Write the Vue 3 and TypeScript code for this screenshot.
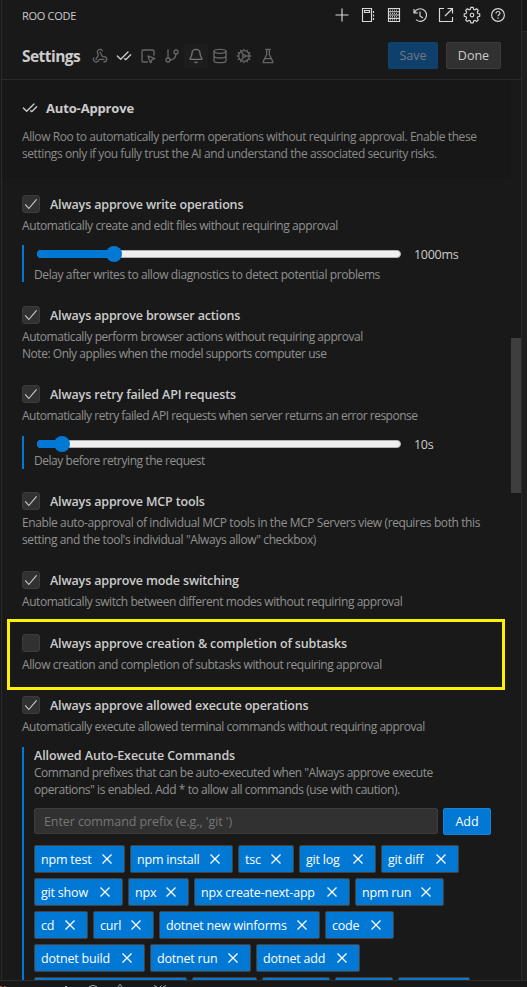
<script setup lang="ts">
interface Line { text: string; tracking: number }
interface Slider { percent: number; value: string; hint: Line }
interface Option { id: string; label: string; lines: Line[]; checked: boolean; slider?: Slider }
interface Chip { text: string; width: number }

const options: Option[] = [
  {
    id: 'write', label: 'Always approve write operations', checked: true,
    lines: [{ text: 'Automatically create and edit files without requiring approval', tracking: -0.41 }],
    slider: { percent: 21.2, value: '1000ms', hint: { text: 'Delay after writes to allow diagnostics to detect potential problems', tracking: -0.4 } },
  },
  {
    id: 'browser', label: 'Always approve browser actions', checked: true,
    lines: [
      { text: 'Automatically perform browser actions without requiring approval', tracking: -0.46 },
      { text: 'Note: Only applies when the model supports computer use', tracking: -0.46 },
    ],
  },
  {
    id: 'retry', label: 'Always retry failed API requests', checked: true,
    lines: [{ text: 'Automatically retry failed API requests when server returns an error response', tracking: -0.49 }],
    slider: { percent: 6.9, value: '10s', hint: { text: 'Delay before retrying the request', tracking: -0.45 } },
  },
  {
    id: 'mcp', label: 'Always approve MCP tools', checked: true,
    lines: [
      { text: 'Enable auto-approval of individual MCP tools in the MCP Servers view (requires both this', tracking: -0.4 },
      { text: 'setting and the tool\'s individual "Always allow" checkbox)', tracking: -0.4 },
    ],
  },
  {
    id: 'mode', label: 'Always approve mode switching', checked: true,
    lines: [{ text: 'Automatically switch between different modes without requiring approval', tracking: -0.44 }],
  },
  {
    id: 'subtasks', label: 'Always approve creation & completion of subtasks', checked: false,
    lines: [{ text: 'Allow creation and completion of subtasks without requiring approval', tracking: -0.43 }],
  },
  {
    id: 'execute', label: 'Always approve allowed execute operations', checked: true,
    lines: [{ text: 'Automatically execute allowed terminal commands without requiring approval', tracking: -0.47 }],
  },
]

const commandHelp: Line[] = [
  { text: 'Command prefixes that can be auto-executed when "Always approve execute', tracking: -0.47 },
  { text: 'operations" is enabled. Add * to allow all commands (use with caution).', tracking: -0.44 },
]

const chipRows: Chip[][] = [
  [{ text: 'npm test', width: 91 }, { text: 'npm install', width: 103 }, { text: 'tsc', width: 56 }, { text: 'git log', width: 77 }, { text: 'git diff', width: 78 }],
  [{ text: 'git show', width: 89 }, { text: 'npx', width: 61 }, { text: 'npx create-next-app', width: 156 }, { text: 'npm run', width: 89 }],
  [{ text: 'cd', width: 54 }, { text: 'curl', width: 61 }, { text: 'dotnet new winforms', width: 161 }, { text: 'code', width: 69 }],
  [{ text: 'dotnet build', width: 111 }, { text: 'dotnet run', width: 101 }, { text: 'dotnet add', width: 104 }],
  [{ text: '', width: 153 }, { text: '', width: 65 }, { text: '', width: 68 }, { text: '', width: 58 }, { text: '', width: 72 }],
]

const spacing = (l: Line) => ({ letterSpacing: l.tracking + 'px' })
</script>

<template>
  <div class="window">
    <main class="panel">
      <div class="titlebar">
        <span class="view-name">ROO CODE</span>
        <div class="actions">
          <svg viewBox="0 0 16 16"><path d="M8 1.500v13M1.500 8h13" /></svg>
          <svg viewBox="0 0 16 16"><path d="M2.500 1.500h9v13h-9zM4.500 3.500h5v2h-5zM13.500 4v2M13.500 7.500v2M13.500 11v2" /></svg>
          <svg viewBox="0 0 16 16"><path d="M2.500 1.500h11v3.200h-11zM2.500 4.700h11V8h-11zM2.500 8h11v3.300h-11zM2.500 11.300h11v3.200h-11z" /><path class="dots" d="M4 3.100h8M4 6.400h8M4 9.700h8M4 12.900h8" /></svg>
          <svg viewBox="0 0 16 16"><path d="M2 2v4h4M2.300 6A6.300 6.300 0 1 1 4 12.700M8 4.500V9l3 2" /></svg>
          <svg viewBox="0 0 16 16"><path d="M6 1.500H1.500v13h13V10M9.500 1.500h5v5M14.500 1.500L7 9" /></svg>
          <svg viewBox="0 0 16 16"><path d="M6.800.6h2.400l.5 2 1.400.6 1.800-1.100 1.700 1.700-1.100 1.800.6 1.400 2 .5v2.400l-2 .5-.6 1.400 1.100 1.800-1.700 1.700-1.800-1.100-1.400.6-.5 2H6.800l-.5-2-1.400-.6-1.800 1.100-1.700-1.700 1.100-1.800-.6-1.400-2-.5V7.500l2-.5.6-1.400-1.100-1.800 1.700-1.700 1.800 1.100 1.400-.6z" transform="translate(.3 -.25) scale(.96)" /><circle cx="8" cy="8" r="1.800" /></svg>
          <svg viewBox="0 0 16 16"><circle cx="8" cy="8" r="6.400" /><path d="M6 6.500C6 3.800 10 4 10 6.300 10 7.800 8 7.800 8 9.300M8 10.600v1.200" /></svg>
        </div>
      </div>

      <header class="header">
        <h1>Settings</h1>
        <nav class="tabs">
          <span class="tab"><svg viewBox="0 0 24 24"><path d="M18 16.980h-5.990c-1.100 0-1.950.940-2.480 1.900A4 4 0 0 1 2 17c.010-.7.200-1.400.570-2" /><path d="m6 17 3.130-5.780c.530-.970.100-2.180-.5-3.100a4 4 0 1 1 6.890-4.060" /><path d="m12 6 3.130 5.730C15.660 12.700 16.900 13 18 13a4 4 0 0 1 0 8" /></svg></span>
          <span class="tab active"><svg viewBox="0 0 24 24"><path d="M18 6 7 17l-5-5" /><path d="m22 10-7.500 7.500L13 16" /></svg></span>
          <span class="tab"><svg viewBox="0 0 24 24"><path d="M12.034 12.681a.498.498 0 0 1 .647-.647l9 3.500a.5.500 0 0 1-.033.943l-3.444 1.068a1 1 0 0 0-.660.660l-1.067 3.443a.5.500 0 0 1-.943.033z" /><path d="M21 11V5a2 2 0 0 0-2-2H5a2 2 0 0 0-2 2v14a2 2 0 0 0 2 2h6" /></svg></span>
          <span class="tab"><svg viewBox="0 0 24 24"><path d="M6 3v12" /><circle cx="18" cy="6" r="3" /><circle cx="6" cy="18" r="3" /><path d="M18 9a9 9 0 0 1-9 9" /></svg></span>
          <span class="tab hovered"><svg viewBox="0 0 24 24"><path d="M10.268 21a2 2 0 0 0 3.464 0" /><path d="M3.262 15.326A1 1 0 0 0 4 17h16a1 1 0 0 0 .740-1.673C19.410 13.956 18 12.499 18 8A6 6 0 0 0 6 8c0 4.499-1.411 5.956-2.738 7.326" /></svg></span>
          <span class="tab"><svg viewBox="0 0 24 24"><ellipse cx="12" cy="5" rx="9" ry="3" /><path d="M3 5v14a9 3 0 0 0 18 0V5M3 12a9 3 0 0 0 18 0" /></svg></span>
          <span class="tab"><svg viewBox="0 0 24 24"><path d="M12 20a8 8 0 1 0 0-16 8 8 0 0 0 0 16ZM12 14a2 2 0 1 0 0-4 2 2 0 0 0 0 4ZM12 2v2M12 22v-2M17 20.660l-1-1.730M11 10.270 7 3.340M20.660 17l-1.730-1M3.340 7l1.730 1M14 12h8M2 12h2M20.660 7l-1.730 1M3.340 17l1.730-1M17 3.340l-1 1.730M11 13.730l-4 6.930" /></svg></span>
          <span class="tab"><svg viewBox="0 0 24 24"><path d="M10 2v7.500a2 2 0 0 1-.200.900L4.700 20.500a1 1 0 0 0 .900 1.500h12.800a1 1 0 0 0 .900-1.500L14.200 10.400a2 2 0 0 1-.200-.900V2M8.500 2h7M7 16h10" /></svg></span>
        </nav>
        <button class="btn save">Save</button>
        <button class="btn done">Done</button>
      </header>

      <div class="scroll">
        <section class="intro">
          <h2><svg viewBox="0 0 24 24"><path d="M18 6 7 17l-5-5" /><path d="m22 10-7.500 7.500L13 16" /></svg><span>Auto-Approve</span></h2>
          <p>Allow Roo to automatically perform operations without requiring approval. Enable these<br>settings only if you fully trust the AI and understand the associated security risks.</p>
        </section>

        <div v-for="o in options" :key="o.id" class="option" :class="'opt-' + o.id">
          <div class="check-row">
            <span class="box"><svg v-if="o.checked" viewBox="0 0 18 18"><path d="M3.200 9.300 6.800 13.500 14.600 4.300" /></svg></span>
            <span class="label">{{ o.label }}</span>
          </div>
          <p v-for="l in o.lines" :key="l.text" class="desc" :style="spacing(l)">{{ l.text }}</p>
          <div v-if="o.slider" class="nested">
            <div class="slider-row">
              <div class="track">
                <div class="fill" :style="{ width: o.slider.percent + '%' }"><i class="thumb"></i></div>
              </div>
              <span class="value">{{ o.slider.value }}</span>
            </div>
            <p class="desc" :style="spacing(o.slider.hint)">{{ o.slider.hint.text }}</p>
          </div>
        </div>

        <section class="commands">
          <h3>Allowed Auto-Execute Commands</h3>
          <p v-for="l in commandHelp" :key="l.text" class="desc" :style="spacing(l)">{{ l.text }}</p>
          <div class="entry">
            <div class="input">Enter command prefix (e.g., 'git ')</div>
            <button class="btn add">Add</button>
          </div>
          <div class="chips">
            <div v-for="(row, r) in chipRows" :key="r" class="chip-row">
              <span v-for="(c, i) in row" :key="i" class="chip" :style="{ width: c.width + 'px' }">
                <template v-if="c.text">
                  <span>{{ c.text }}</span>
                  <svg viewBox="0 0 10 10"><path d="M.5.500l9 9M9.500.500l-9 9" /></svg>
                </template>
              </span>
            </div>
          </div>
        </section>
        <div class="highlight"></div>
        <div class="scrollbar"></div>
      </div>
    </main>
    <aside class="gutter"><div class="gutter-top"></div></aside>
    <footer class="status">
      <svg viewBox="0 0 527 6"><path class="warm" d="M0 5.500h2M4 5.500h1.500" /><path d="M65 5.500h2M89 5.800q4-3 8 0M118 5.800l2-2.500 2 2.500M154 4.500l3 1.500M160 6l1.500-1.500M163 6l3-1.500" /></svg>
    </footer>
  </div>
</template>

<style>
body { background: #181818; }
</style>

<style scoped>
* { box-sizing: border-box; }
.window {
  width: 527px; height: 987px; overflow: hidden; background: #181818; color: #ccc;
  font-family: "Open Sans", "Noto Sans", sans-serif; font-size: 12.500px;
  display: grid; grid-template: 980px 7px / 522px 5px;
}
h1, h2, h3, p { margin: 0; white-space: nowrap; }
svg { display: block; fill: none; stroke: currentColor; overflow: visible; flex: none; }
.panel { margin-left: 1px; border-left: 1px solid #2b2b2b; border-right: 1px solid #2b2b2b; display: flex; flex-direction: column; overflow: hidden; background: #191919; }
.titlebar { height: 31px; display: flex; align-items: center; justify-content: space-between; padding: 0 15px 1px 20px; }
.view-name { font-size: 11px; letter-spacing: -.3px; }
.actions { display: flex; gap: 10px; color: #d8d8d8; }
.actions svg { width: 16px; height: 16px; stroke-width: 1.150; }
.dots { stroke-dasharray: 1 1; stroke-width: 1; }
.header { height: 49px; border-bottom: 1px solid #2b2b2b; padding: 1px 20px 0; display: flex; align-items: center; }
h1 { font-size: 15.500px; font-weight: 700; width: 66px; letter-spacing: -.55px; line-height: 24px; padding-top: 1px; }
.tabs { display: flex; flex: 1; color: #666; padding-top: 1px; }
.tab { width: 24px; height: 24px; display: grid; place-items: center; }
.tab svg, h2 svg { width: 16px; height: 16px; stroke-width: 2; stroke-linecap: round; stroke-linejoin: round; }
.tab.active { color: #ccc; }
.tab.hovered { background: #1d1d1d; color: #777; }
.btn { font: inherit; height: 27px; padding: 0; border: 1px solid transparent; border-radius: 2px; text-align: center; line-height: 26px; }
.save { width: 50px; background: #0e406b; color: #747a80; border-color: #0f426d; margin-right: 8px; }
.done { width: 55px; background: #313131; border-color: #3c3c3c; color: #ccc; }
.scroll { position: relative; flex: 1; overflow: hidden; }
.intro { height: 98px; width: 509px; background: #171717; padding: 18px 20px 0; }
h2 { height: 20px; display: flex; align-items: center; gap: 8px; font-size: 13px; font-weight: 700; letter-spacing: -.15px; }
.intro p { margin-top: 10px; line-height: 17px; font-size: 12px; color: #8c8c8c; letter-spacing: -.430px; }
.option { padding-left: 20px; }
.opt-write { margin-top: 17px; height: 111px; }
.opt-browser { height: 79px; }
.opt-retry { height: 107px; }
.opt-mcp { height: 79px; }
.opt-mode { height: 63px; }
.opt-subtasks { height: 62px; }
.opt-execute { height: 51px; }
.check-row { display: flex; height: 18px; gap: 10px; align-items: flex-start; margin-bottom: 4px; }
.box { width: 18px; height: 18px; border: 1px solid #3c3c3c; border-radius: 3px; background: #313131; }
.box svg { width: 18px; height: 18px; margin: -1px; stroke-width: 1.100; }
.label, h3 { font-weight: 600; font-size: 12.500px; letter-spacing: -.150px; white-space: nowrap; }
.label { line-height: 18px; padding-top: 1px; }
.desc { font-size: 12px; line-height: 17px; color: #919191; }
.nested { border-left: 2px solid #0078d4; padding-left: 10px; margin-top: 11px; height: 37px; }
.slider-row { height: 18px; display: flex; align-items: center; padding-left: 3px; margin-bottom: 3px; }
.opt-retry .nested { height: 33px; margin-top: 12px; }
.opt-retry .slider-row { height: 16px; margin-bottom: 0; }
.track { width: 364px; height: 8px; border-radius: 4px; background: #efefef; border: 1px solid #b2b2b2; margin-right: 13px; }
.fill { position: relative; height: 8px; margin: -1px; border-radius: 4px; background: #0078d4; }
.thumb { position: absolute; right: -8px; top: -4px; width: 16px; height: 16px; border-radius: 50%; background: #0078d4; }
.value { letter-spacing: -.3px; }
.commands { margin-left: 20px; border-left: 2px solid #0078d4; padding-left: 10px; height: 240px; }
h3 { line-height: 17px; letter-spacing: -.070px; }
.entry { display: flex; gap: 5px; margin-top: 10px; }
.input { width: 404px; height: 26px; background: #313131; border: 1px solid #3c3c3c; border-radius: 2px; padding-left: 9px; line-height: 25px; color: #767676; letter-spacing: -.080px; }
.add { width: 48px; background: #0078d4; color: #fff; border-color: #1683d8; }
.chips { margin-top: 10px; display: flex; flex-direction: column; gap: 5px; }
.chip-row { display: flex; gap: 5px; }
.chip { height: 28px; background: #0078d4; border: 1px solid #4a4036; border-radius: 2px; color: #fff; display: flex; align-items: center; justify-content: space-between; padding: 0 12px 0 6px; white-space: nowrap; letter-spacing: -.2px; }
.chip svg { width: 10px; height: 10px; stroke-width: 1.300; }
.highlight { position: absolute; left: 5px; top: 539px; width: 498px; height: 71px; border: 3px solid #fff200; }
.scrollbar { position: absolute; right: 0; top: 258px; width: 10px; height: 155px; background: #3e3e3e; }
.gutter { background: #1f1f1f; }
.gutter-top { height: 32px; background: #181818; border-bottom: 1px solid #2b2b2b; }
.status { grid-column: 1 / 3; background: #181818; border-top: 1px solid #2b2b2b; color: #aaa; }
.status svg { width: 527px; height: 6px; }
.warm { stroke: #b8572a; }
</style>
